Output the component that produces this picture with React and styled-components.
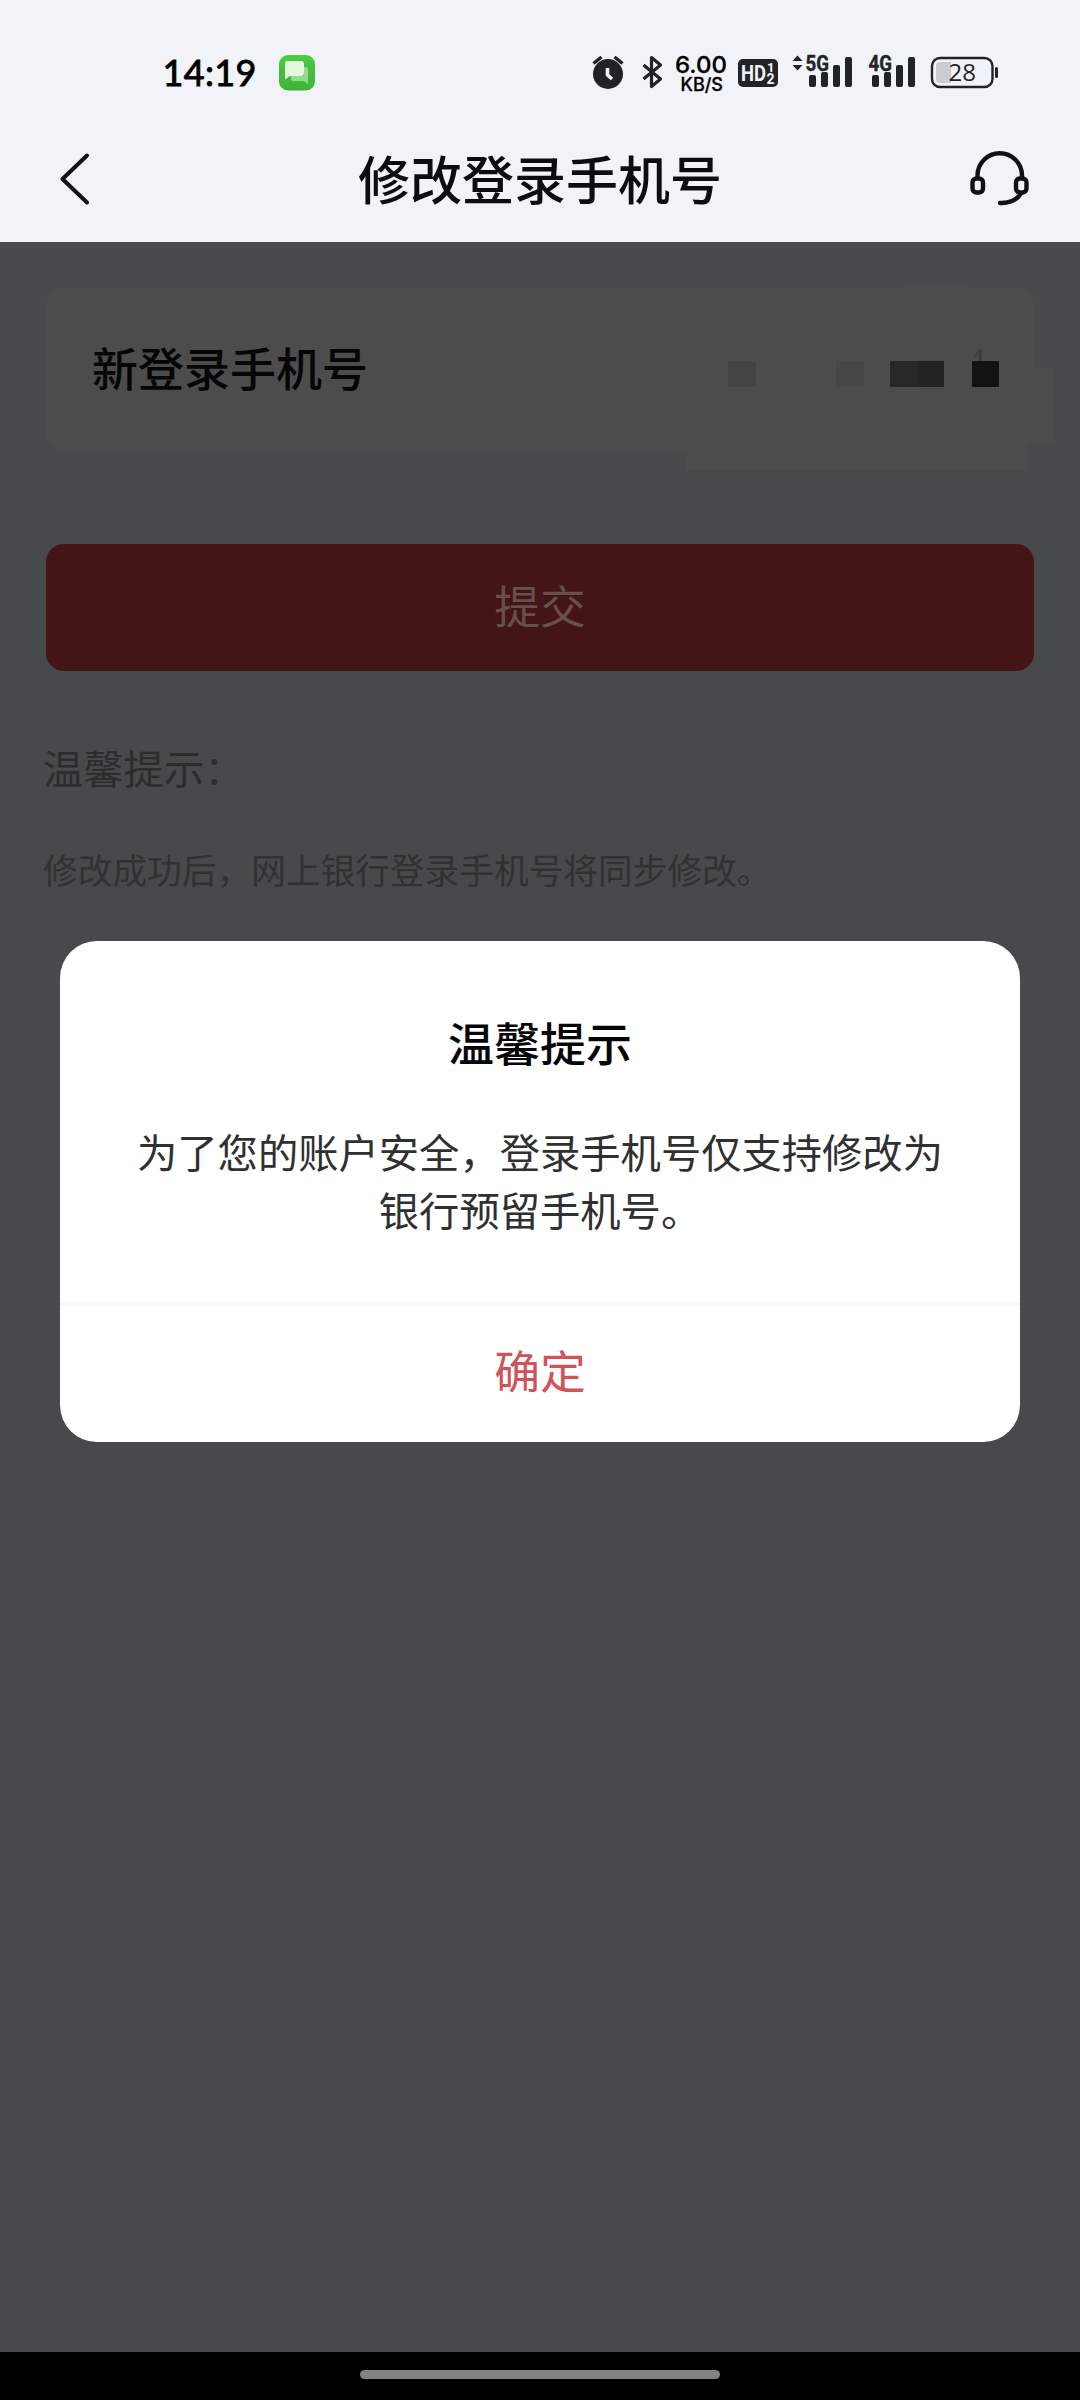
import React from 'react';
import styled, { createGlobalStyle } from 'styled-components';

const GlobalStyle = createGlobalStyle`
  * { box-sizing: border-box; }
  html, body { margin: 0; padding: 0; background: #48494b; }
  body { font-family: "Noto Sans CJK SC", sans-serif; }
`;

const Screen = styled.div`
  width: 1080px;
  height: 2400px;
  display: flex;
  flex-direction: column;
  overflow: hidden;
  background: #f2f3f8;
`;

const StatusBar = styled.div`
  height: 118px;
  flex: none;
  display: flex;
  justify-content: space-between;
  align-items: flex-start;
  padding: 40px 80px 0 162px;
`;

const StatusSvg = styled.svg`
  display: block;
  height: 64px;
  width: ${(p) => p.$w}px;
  overflow: visible;
`;

const NavBar = styled.header`
  height: 124px;
  flex: none;
  display: flex;
  align-items: center;
  justify-content: space-between;
  padding: 0 50px 0 50px;
`;

const NavIcon = styled.svg`
  display: block;
  width: 60px;
  height: 64px;
  flex: none;
`;

const NavTitle = styled.h1`
  margin: 0;
  padding-bottom: 4px;
  font-size: 52px;
  line-height: 64px;
  font-weight: 500;
  color: #0c0d10;
`;

const Body = styled.main`
  position: relative;
  height: 2110px;
  flex: none;
  padding: 46px 46px 0;
  background: #48494b;
`;

const Field = styled.div`
  position: relative;
  display: flex;
  align-items: center;
  justify-content: space-between;
  height: 164px;
  padding: 0 34px 4px 46px;
  border-radius: 18px;
  background: #4c4c4c;
`;

const FieldLabel = styled.span`
  position: relative;
  padding-bottom: 4px;
  font-size: 46px;
  line-height: 60px;
  font-weight: 500;
  color: #060606;
`;

const Patch = styled.i`
  position: absolute;
  left: ${(p) => p.$x}px;
  top: ${(p) => p.$y}px;
  width: ${(p) => p.$w}px;
  height: ${(p) => p.$h}px;
  background: #4c4c4c;
`;

const Mosaic = styled.svg`
  position: relative;
  display: block;
  width: 272px;
  height: 40px;
`;

const Submit = styled.button`
  display: flex;
  align-items: center;
  justify-content: center;
  width: 100%;
  height: 127px;
  margin: 92px 0 0;
  padding: 0 0 7px;
  border: 0;
  border-radius: 18px;
  background: #431517;
  color: #684e4d;
  font: 400 45.8px/60px "Noto Sans CJK SC", sans-serif;
`;

const TipTitle = styled.h2`
  margin: 66px 0 0 -3px;
  font-size: 40.3px;
  line-height: 60px;
  font-weight: 400;
  color: #2b2c2c;
`;

const TipText = styled.p`
  margin: 47px 0 0 -3px;
  font-size: 34.7px;
  line-height: 50px;
  font-weight: 400;
  color: #303131;
  white-space: nowrap;
`;

const Dialog = styled.section`
  position: absolute;
  left: 60px;
  top: 699px;
  width: 960px;
  height: 501px;
  display: flex;
  flex-direction: column;
  border-radius: 37px;
  background: #fff;
  overflow: hidden;
`;

const DialogContent = styled.div`
  flex: 1;
  padding: 67px 0 0;
  text-align: center;
`;

const DialogTitle = styled.h3`
  margin: 0;
  font-size: 46px;
  line-height: 66px;
  font-weight: 500;
  color: #060606;
`;

const DialogText = styled.p`
  width: 812px;
  margin: 48px auto 0;
  font-size: 40.3px;
  line-height: 58px;
  color: #303030;
`;

const Confirm = styled.button`
  height: 139px;
  padding: 0 0 9px;
  border: 0;
  border-top: 2px solid #f6f6f6;
  background: transparent;
  color: #cf5357;
  font: 400 45.8px/60px "Noto Sans CJK SC", sans-serif;
`;

const HomeBar = styled.footer`
  height: 48px;
  flex: none;
  display: flex;
  justify-content: center;
  padding-top: 18px;
  background: #000;
`;

const HomePill = styled.div`
  width: 360px;
  height: 9px;
  border-radius: 5px;
  background: #828282;
`;

const INK = '#222326';

function Signal({ x, label }) {
  return (
    <g fill={INK}>
      <text x={x - 3.5} y="70.5" fontFamily="Roboto, sans-serif" fontWeight="700" fontSize="21.5" textLength="23.5" lengthAdjust="spacingAndGlyphs" stroke={INK} strokeWidth="0.4">{label}</text>
      {[[0, 75], [12, 72], [24, 65], [36, 57]].map(([dx, y]) => (
        <rect key={dx} x={x + dx} y={y} width="7" height={87 - y} rx="2" />
      ))}
    </g>
  );
}

function StatusLeft() {
  return (
    <StatusSvg $w={160} viewBox="162 40 160 64">
      <defs>
        <linearGradient id="msg" x1="0" y1="0" x2="0" y2="1">
          <stop offset="0" stopColor="#4fc944" />
          <stop offset="1" stopColor="#3fb436" />
        </linearGradient>
      </defs>
      <text x="162.5" y="85.5" fontFamily="Lato, sans-serif" fontWeight="400" fontSize="36" textLength="94" stroke="#000" strokeWidth="0.9">14:19</text>
      <rect x="279" y="55" width="36" height="35.5" rx="9" fill="url(#msg)" />
      <path d="M291 76h13v-9h2q2 0 2 2v15l-4-3h-11q-2 0-2-2z" fill="#94dc8d" />
      <path d="M287 61h14q3 0 3 3v9q0 3-3 3h-11l-5 3.500V63q0-2 2-2z" fill="#e2f7df" />
    </StatusSvg>
  );
}

function StatusRight() {
  return (
    <StatusSvg $w={410} viewBox="590 40 410 64">
      <g stroke={INK} fill="none">
        <path d="M593.500 63.500l8-6.500M622.500 63.500l-8-6.500" strokeWidth="3.500" />
        <circle cx="608" cy="74" r="15" fill={INK} stroke="none" />
        <path d="M607.500 68v7l4.500 4" stroke="#f2f3f8" strokeWidth="3.600" />
        <path d="M643.500 65l17 14-9 7.500V57.500l9 7.500-17 14" strokeWidth="3.200" strokeLinejoin="round" />
      </g>
      <text x="675" y="73" fontFamily="Inter, sans-serif" fontWeight="500" fontSize="23.500" textLength="52" lengthAdjust="spacingAndGlyphs" stroke="#000" strokeWidth="0.3">6.00</text>
      <text x="680.500" y="90.500" fontFamily="Inter, sans-serif" fontWeight="500" fontSize="18" textLength="42.500" lengthAdjust="spacingAndGlyphs" stroke="#000" strokeWidth="0.3">KB/S</text>
      <rect x="738" y="59" width="40" height="28" rx="5" fill={INK} />
      <g fill="#f2f3f8" fontFamily="Roboto, sans-serif" fontWeight="700">
        <text x="741" y="81" fontSize="22" textLength="25" lengthAdjust="spacingAndGlyphs">HD</text>
        <text x="767" y="72" fontSize="13">1</text>
        <text x="766.500" y="83.500" fontSize="14">2</text>
      </g>
      <path d="M797.500 55.500l5 5.500h-10zM797.500 70.500l5-5.500h-10z" fill={INK} />
      <Signal x={809} label="5G" />
      <Signal x={872} label="4G" />
      <rect x="932" y="58" width="60.500" height="29" rx="8" fill="none" stroke={INK} strokeWidth="2.400" />
      <path d="M940 62h11v21h-11q-4 0-4-4V66q0-4 4-4z" fill="#cbccd0" />
      <rect x="995" y="67" width="3" height="11" rx="1.500" fill={INK} />
      <text x="948.500" y="81" fontFamily="Open Sans, sans-serif" fontWeight="400" fontSize="24" fill={INK}>28</text>
    </StatusSvg>
  );
}

export default function App() {
  return (
    <>
      <GlobalStyle />
      <Screen>
        <StatusBar>
          <StatusLeft />
          <StatusRight />
        </StatusBar>
        <NavBar>
          <NavIcon viewBox="50 148 60 64">
            <path d="M87 155.500L62.500 179l24.500 23.500" fill="none" stroke="#111214" strokeWidth="4" strokeLinecap="round" strokeLinejoin="round" />
          </NavIcon>
          <NavTitle>修改登录手机号</NavTitle>
          <NavIcon viewBox="970 148 60 64">
            <g fill="none" stroke="#111214" strokeWidth="4.400" strokeLinecap="round">
              <path d="M977.500 178v-2.500a22 22 0 0 1 44.500 0V178" />
              <rect x="972.500" y="178.500" width="10.500" height="14" rx="4" />
              <rect x="1016" y="178.500" width="10.500" height="14" rx="4" />
              <path d="M1021 193.500c-4 6-11 10-21 9.500" />
            </g>
          </NavIcon>
        </NavBar>
        <Body>
          <Field>
            <Patch $x={640} $y={160} $w={342} $h={22} />
            <Patch $x={979} $y={80} $w={28} $h={75} />
            <Patch $x={859} $y={-4} $w={64} $h={10} />
            <FieldLabel>新登录手机号</FieldLabel>
            <Mosaic viewBox="728 351 272 40">
              <rect x="728" y="364" width="28" height="26" fill="#444" />
              <rect x="836" y="364" width="28" height="26" fill="#464646" />
              <rect x="890" y="364" width="28" height="26" fill="#272727" />
              <rect x="918" y="364" width="26" height="26" fill="#232323" />
              <rect x="972" y="364" width="27" height="26" fill="#131313" />
              <path d="M973 360l6-8h3v12h-3v-7l-5 4z" fill="#3c3c3c" />
            </Mosaic>
          </Field>
          <Submit>提交</Submit>
          <TipTitle>温馨提示：</TipTitle>
          <TipText>修改成功后，网上银行登录手机号将同步修改。</TipText>
          <Dialog role="dialog">
            <DialogContent>
              <DialogTitle>温馨提示</DialogTitle>
              <DialogText>为了您的账户安全，登录手机号仅支持修改为银行预留手机号。</DialogText>
            </DialogContent>
            <Confirm>确定</Confirm>
          </Dialog>
        </Body>
        <HomeBar>
          <HomePill />
        </HomeBar>
      </Screen>
    </>
  );
}
